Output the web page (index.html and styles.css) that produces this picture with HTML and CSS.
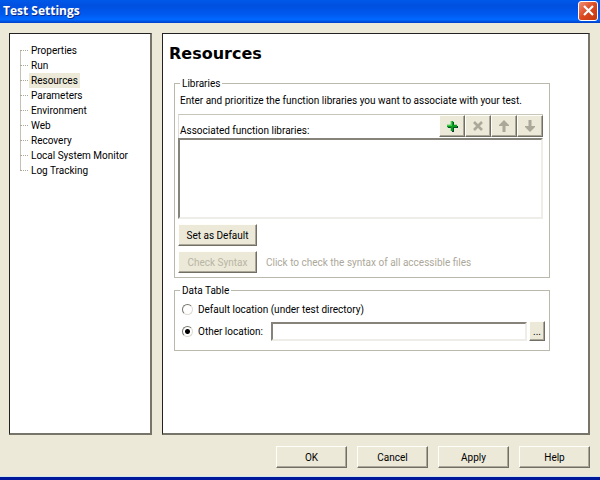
FILE: index.html
```html
<!DOCTYPE html>
<html lang="en">
<head>
<meta charset="utf-8">
<title>Test Settings</title>
<link rel="stylesheet" href="styles.css">
</head>
<body>
<header class="titlebar">
  <h1 class="title">Test Settings</h1>
  <button class="close" type="button" aria-label="Close">
    <svg width="11" height="11" viewBox="0 0 11 11"><path d="M1 1L10 10M10 1L1 10" stroke="#fff" stroke-width="2.2"/></svg>
  </button>
</header>
<main class="content">
  <nav class="tree">
    <ul>
      <li><a href="#">Properties</a></li>
      <li><a href="#">Run</a></li>
      <li><a href="#" class="selected">Resources</a></li>
      <li><a href="#">Parameters</a></li>
      <li><a href="#">Environment</a></li>
      <li><a href="#">Web</a></li>
      <li><a href="#">Recovery</a></li>
      <li><a href="#">Local System Monitor</a></li>
      <li><a href="#">Log Tracking</a></li>
    </ul>
  </nav>
  <section class="page">
    <h2>Resources</h2>
    <fieldset class="libraries">
      <legend>Libraries</legend>
      <p class="intro">Enter and prioritize the function libraries you want to associate with your test.</p>
      <div class="list-head">
        <label for="libs">Associated function libraries:</label>
        <div class="tools">
          <button class="btn tool" type="button" aria-label="Add">
            <svg width="12" height="12" viewBox="0 0 12 12"><path d="M7 2V12M2 7H12" stroke="#043c28" stroke-width="2"/><path d="M6 1V11M1 6H11" stroke="#0a9c1c" stroke-width="2.4"/><path d="M5.5 1V6M1 5.5H6" stroke="#3cd048"/></svg>
          </button>
          <button class="btn tool" type="button" aria-label="Remove" disabled>
            <svg width="12" height="12" viewBox="0 0 12 12"><path d="M2 2L10 10M10 2L2 10" stroke="#aca899" stroke-width="2.6"/></svg>
          </button>
          <button class="btn tool" type="button" aria-label="Move up" disabled>
            <svg width="12" height="12" viewBox="0 0 12 12"><path d="M6 0L11 5V6H7.5V12H4.5V6H1V5Z" fill="#aca899"/></svg>
          </button>
          <button class="btn tool" type="button" aria-label="Move down" disabled>
            <svg width="12" height="12" viewBox="0 0 12 12"><path d="M6 12L11 7V6H7.5V0H4.5V6H1V7Z" fill="#aca899"/></svg>
          </button>
        </div>
      </div>
      <select id="libs" class="list" size="5"></select>
      <button class="btn wide" type="button">Set as Default</button>
      <div class="check">
        <button class="btn wide" type="button" disabled>Check Syntax</button>
        <span>Click to check the syntax of all accessible files</span>
      </div>
    </fieldset>
    <fieldset class="data">
      <legend>Data Table</legend>
      <div class="option">
        <input type="radio" name="loc" id="loc-default">
        <label for="loc-default">Default location (under test directory)</label>
      </div>
      <div class="option">
        <input type="radio" name="loc" id="loc-other" checked>
        <label for="loc-other">Other location:</label>
        <input type="text" class="path" aria-label="Other location path">
        <button class="btn browse" type="button" aria-label="Browse">...</button>
      </div>
    </fieldset>
  </section>
</main>
<footer class="actions">
  <button class="btn action" type="button">OK</button>
  <button class="btn action" type="button">Cancel</button>
  <button class="btn action" type="button">Apply</button>
  <button class="btn action" type="button">Help</button>
</footer>
</body>
</html>
```
FILE: styles.css
```css
* { box-sizing: border-box; }

body {
  margin: 0;
  min-height: 100vh;
  display: flex;
  flex-direction: column;
  background: #ece9d8;
  border-bottom: 3px solid #00199a;
  color: #000;
  font: 10px/15px Roboto, "Liberation Sans", sans-serif;
}

h1, h2, p, ul { margin: 0; padding: 0; }
button, input, select { font: inherit; color: inherit; margin: 0; }

.titlebar {
  height: 23px;
  display: flex;
  align-items: center;
  justify-content: space-between;
  padding: 0 2px 2px 3px;
  background: linear-gradient(#0058e8, #0050e0 25%, #0058ee 60%, #0068ff 85%, #0040c8);
}
.title {
  color: #fff;
  font: bold 12px/18px "Open Sans", sans-serif;
  text-shadow: 1px 1px #0a2a88;
}
.close {
  width: 20px;
  height: 20px;
  padding: 0;
  display: flex;
  align-items: center;
  justify-content: center;
  border: 1px solid #fff;
  border-radius: 3px;
  background: linear-gradient(135deg, #f09078, #dc4820 50%, #c03810);
}

.content {
  flex: 1;
  display: flex;
  gap: 10px;
  padding: 10px 10px 0 9px;
}
.tree, .page {
  background: #fff;
  border: 1px solid #222;
}
.tree {
  flex: 0 0 143px;
  padding: 9px 10px;
  border-right: 2px solid #777469;
  border-bottom: 2px solid #777469;
}
.tree ul { list-style: none; }
.tree li {
  display: flex;
  align-items: center;
  height: 15px;
  white-space: nowrap;
  background: linear-gradient(#c4c2b8, #c4c2b8) 0 0 / 1px 15px no-repeat;
}
.tree li:first-child { background-position: 0 8px; }
.tree li:last-child { background-size: 1px 8px; }
.tree li::before {
  content: "";
  width: 8px;
  margin-right: 1px;
  border-top: 1px dotted #aaa79b;
}
.tree a {
  padding: 0 2px;
  color: inherit;
  text-decoration: none;
}
.tree .selected { background: #ece9d8; }

.page {
  flex: 1;
  min-width: 0;
  padding: 10px 38px 0 11px;
  border-right: 2px solid #777469;
  border-bottom: 2px solid #777469;
}
h2 {
  margin: 0 0 12px -5px;
  font: bold 16px/20px "DejaVu Sans", sans-serif;
  color: #000;
}
fieldset {
  margin: 0;
  min-width: 0;
  border: 1px solid #bbb8ae;
}
legend { padding: 0 2px; }

.libraries { padding: 2px 6px 4px 3px; }
.libraries legend { margin-left: 2px; }
.intro { padding-left: 2px; }
.list-head {
  display: flex;
  align-items: flex-end;
  justify-content: space-between;
  margin-top: 6px;
  border-top: 1px solid #c8c5bb;
  border-left: 1px solid #dddbd2;
}
.list-head label { padding-left: 1px; }
.tools { display: flex; margin-bottom: 1px; }

.btn {
  height: 22px;
  padding: 0;
  border: 1px solid;
  border-color: #fffef8 #716f64 #716f64 #fffef8;
  box-shadow: inset -1px -1px #aca899;
  background: #ece9d8;
  text-align: center;
}
.btn:disabled { color: #b8b5a5; }
.tool {
  width: 26px;
  display: flex;
  align-items: center;
  justify-content: center;
}
.list {
  display: block;
  width: 100%;
  height: 81px;
  border: 2px solid;
  border-color: #85837a #eeede8 #eeede8 #85837a;
  border-radius: 0;
  background: #fff;
}
.wide { display: block; width: 79px; margin-top: 5px; }
.check {
  display: flex;
  align-items: center;
  gap: 9px;
  margin-top: 5px;
  color: #aca899;
}
.check .wide { margin-top: 0; }

.data { margin-top: 5px; padding: 0 4px 8px 7px; }
.data legend { margin-left: -2px; }
.option { display: flex; align-items: center; height: 22px; }
.option input[type="radio"] {
  appearance: none;
  width: 11px;
  height: 11px;
  margin-right: 5px;
  border: 1px solid;
  border-color: #77756c #dddbd2 #dddbd2 #77756c;
  border-radius: 50%;
}
.option input[type="radio"]:checked {
  background: radial-gradient(circle, #000 2px, transparent 3px);
}
.path {
  flex: 1;
  min-width: 0;
  height: 19px;
  margin: 0 2px 0 8px;
  border: 2px solid;
  border-color: #85837a #eeede8 #eeede8 #85837a;
}
.browse { width: 16px; height: 20px; }

.actions {
  display: flex;
  justify-content: flex-end;
  gap: 10px;
  padding: 11px 10px 8px;
  border-bottom: 1px solid #d4e4ec;
}
.action { width: 71px; }
```
